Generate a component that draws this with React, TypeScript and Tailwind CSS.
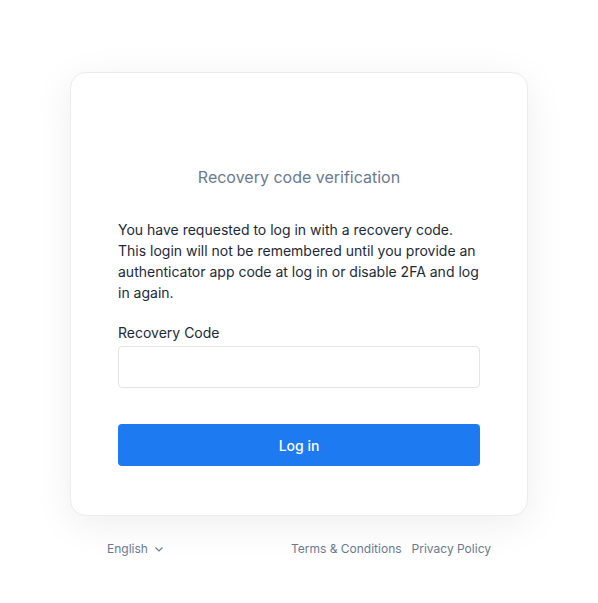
import React from 'react';

export default function App() {
  return (
    <div className="min-h-[603px] bg-white font-['Inter','Liberation_Sans',sans-serif] pt-[72px]">
        {/* card */}
        <div className="mx-auto w-[458px] bg-white border border-[#ececef] rounded-2xl shadow-[0_8px_40px_rgba(0,0,0,0.07)] px-[47px] pt-[92px] pb-[49px]">
            <h1 className="text-center text-base leading-6 text-[#6a7a8f]">Recovery code verification</h1>
            <p className="mt-[30px] text-sm leading-[21px] text-[#1d2939]">
                You have requested to log in with a recovery code. This login will not be remembered until you provide an authenticator app code at log in or disable 2FA and log in again.
            </p>
            <label className="block mt-[20px] text-sm leading-5 text-[#1d2939]">Recovery Code</label>
            <input className="mt-[3px] block w-full h-[42px] rounded border border-[#e2e4e8] px-3 text-sm outline-none" />
            <button className="mt-[36px] w-full h-[42px] rounded bg-[#1e7af0] text-white text-sm font-medium pt-[2px]">Log in</button>
        </div>
        {/* footer */}
        <div className="mx-auto w-[384px] mt-[25px] flex justify-between text-xs leading-4 text-[#6a7a8f]">
            <div className="flex items-center gap-[6px]">
                English
                <svg width="10" height="10" viewBox="0 0 10 10" fill="none" stroke="currentColor" strokeWidth="1.1">
                    <path d="M1.5 3.5 L5 7 L8.5 3.5" />
                </svg>
            </div>
            <div className="flex gap-[10px]">
                <span>Terms &amp; Conditions</span>
                <span>Privacy Policy</span>
            </div>
        </div>
    </div>
  );
}
